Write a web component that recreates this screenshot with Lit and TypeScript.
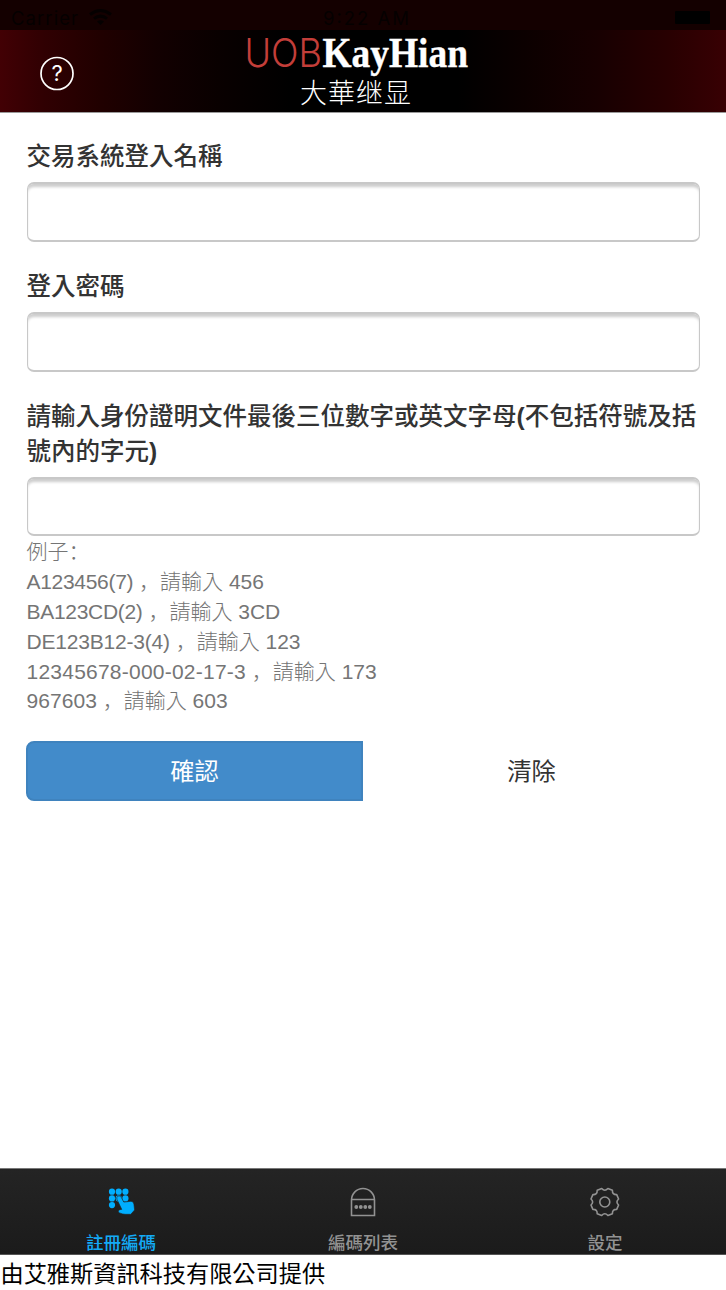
import { LitElement, html, css, svg } from "lit";
import { customElement } from "lit/decorators.js";

const EXAMPLES = [
  { id: "A123456(7)", tail: "456", cls: "e1" },
  { id: "BA123CD(2)", tail: "3CD", cls: "e2" },
  { id: "DE123B12-3(4)", tail: "123", cls: "e3" },
  { id: "12345678-000-02-17-3", tail: "173", cls: "e4" },
  { id: "967603", tail: "603", cls: "e5" },
];

@customElement("app-header")
class AppHeader extends LitElement {
  static styles = css`
    :host { display: block; height: 112px; border-bottom: 1px solid #999; }
    svg { display: block; }
    .status { font-family: Inter, sans-serif; font-size: 18.5px; fill: #050000; }
    .thin { font-family: Inter, sans-serif; font-weight: 300; font-size: 39px; fill: #c33e39; }
    .serif { font-family: "Liberation Serif", serif; font-weight: 700; font-size: 42px; fill: #fff; stroke: #fff; stroke-width: .4; }
    .cjk { font-family: "Noto Sans CJK SC", sans-serif; font-weight: 300; font-size: 27px; fill: #fff; }
    .q { font-family: Inter, sans-serif; font-size: 22px; font-weight: 400; fill: #fff; }
  `;
  render() {
    return html`<svg width="726" height="112" viewBox="0 0 726 112">
      <defs>
        <linearGradient id="bg">
          <stop offset="0" stop-color="#420004" />
          <stop offset=".06" stop-color="#300002" />
          <stop offset=".14" stop-color="#200000" />
          <stop offset=".22" stop-color="#120001" />
          <stop offset=".31" stop-color="#080000" />
          <stop offset=".4" stop-color="#000" />
          <stop offset=".63" stop-color="#000" />
          <stop offset=".72" stop-color="#0b0000" />
          <stop offset=".82" stop-color="#170001" />
          <stop offset=".92" stop-color="#280001" />
          <stop offset="1" stop-color="#380003" />
        </linearGradient>
      </defs>
      <rect width="726" height="112" fill="url(#bg)" />
      <rect width="726" height="30" fill="#140000" />
      <text class="status" x="11" y="25" textLength="67">Carrier</text>
      <g fill="none" stroke="#050000" stroke-width="3">
        <path d="M90 14.500Q100.500 6.500 111 14.500M94 18.700Q100.500 13.500 107 18.700" />
        <path d="M97 21.500Q100.500 19 104 21.500L100.500 25Z" fill="#050000" stroke="none" />
      </g>
      <text class="status" x="323" y="25" textLength="86">9:22 AM</text>
      <rect x="675" y="11" width="35" height="13" rx="1" fill="#000" />
      <circle cx="57" cy="73.500" r="16" fill="none" stroke="#fff" stroke-width="1.700" />
      <text class="q" x="57" y="81" text-anchor="middle">?</text>
      <text class="thin" x="244.500" y="67" textLength="77.500" lengthAdjust="spacingAndGlyphs">UOB</text>
      <text class="serif" x="322.500" y="67" textLength="145.500" lengthAdjust="spacingAndGlyphs">KayHian</text>
      <text class="cjk" x="300" y="103" textLength="111">大華继显</text>
    </svg>`;
  }
}

@customElement("app-tabs")
class AppTabs extends LitElement {
  static styles = css`
    :host {
      display: grid; grid-template-columns: repeat(3, 1fr); box-sizing: border-box; height: 87px;
      background: linear-gradient(#242424, #1b1b1b); border-top: 1px solid #777; border-bottom: 1px solid #555;
      font: 500 17.500px/26px "Noto Sans CJK TC", sans-serif; color: #929292;
    }
    .tab { display: flex; flex-direction: column; align-items: center; padding-top: 15px; }
    .active { color: #13aaf5; }
    svg { display: block; width: 34px; height: 34px; margin-bottom: 11px; flex: none; }
    .label { white-space: nowrap; }
  `;
  render() {
    return html`
      <div class="tab active">
        <svg viewBox="0 0 34 34" fill="#00aeff">
          ${[7.7, 14.4, 21.1].map((y) => [8, 14.7, 21.4].map((x) => (x > 14 && y > 20 ? null : svg`<circle cx=${x} cy=${y} r="3.100" />`)))}
          <path d="M13.500 12.500C15 11.500 16.400 12 17.200 13.300L19.800 18.100L27 17.300Q29.600 17.400 29.900 20L30.600 26L26.800 30.300H21.300Q18.800 30.300 15.500 28.900Q13.500 27.700 14.600 26.400Q15.600 25.300 17.800 25.400L13 15.500Q12.200 13.500 13.500 12.500Z" stroke="#202020" stroke-width=".6" />
        </svg>
        <span class="label">註冊編碼</span>
      </div>
      <div class="tab">
        <svg viewBox="0 0 34 34" fill="none" stroke="currentColor" stroke-width="1.600">
          <path d="M5.500 31.500V16A11.500 11.500 0 0 1 28.500 16V31.500ZM5.500 15.500H28.500" />
          <g fill="currentColor" stroke="none"><circle cx="10.300" cy="23" r="1.900" /><circle cx="14.800" cy="23" r="1.900" /><circle cx="19.300" cy="23" r="1.900" /><circle cx="23.800" cy="23" r="1.900" /></g>
        </svg>
        <span class="label">編碼列表</span>
      </div>
      <div class="tab">
        <svg viewBox="0 0 34 34" fill="none" stroke="currentColor" stroke-width="1.600" stroke-linejoin="round">
          <circle cx="16.800" cy="18" r="5" />
          <path d="M13.700 4.500Q16.800 8 19.900 4.500L24.400 6.300Q24.200 10.800 28.700 10.600L30.600 15Q27.300 18 30.600 21L28.700 25.400Q24.200 25.200 24.400 29.700L19.900 31.500Q16.800 28 13.700 31.500L9.200 29.700Q9.400 25.200 4.900 25.400L3 21Q6.300 18 3 15L4.900 10.600Q9.400 10.800 9.200 6.300Z" />
        </svg>
        <span class="label">設定</span>
      </div>`;
  }
}

@customElement("app-root")
class AppRoot extends LitElement {
  static styles = css`
    :host {
      display: flex; flex-direction: column; height: 1290px; background: #fff; color: #333;
      font-family: "Liberation Sans", "Noto Sans CJK TC", sans-serif;
    }
    .form { flex: 1; padding: 26px 26px 0; }
    .label { display: block; font: 500 24.500px/35px "Liberation Sans", "Noto Sans CJK TC", sans-serif; padding-left: .5px; margin-bottom: 8px; white-space: nowrap; }
    .p { font-weight: 700; }
    .input {
      display: block; box-sizing: border-box; width: 673px; height: 60px; margin: 0 0 27px .5px;
      border: 1.500px solid #c8c8c8; border-width: 2px 1.500px; border-radius: 7px; background: #fff;
      box-shadow: inset 0 4px 3px -1px rgba(0, 0, 0, .2); outline: none; padding: 0;
    }
    .last { height: 59px; margin-bottom: 0; }
    .help { color: #757575; font-size: 21px; line-height: 29.900px; padding-bottom: 25.600px; }
    .line { height: 29.900px; white-space: pre; font-weight: 300; padding-left: .5px; }
    .punct { font-family: "Noto Sans CJK SC", sans-serif; }
    .e1 { letter-spacing: -.3px; }
    .e2 { letter-spacing: -.3px; }
    .e3 { letter-spacing: -.2px; }
    .e4 { letter-spacing: .23px; }
    .e5 { letter-spacing: .05px; }
    .actions { display: flex; font-size: 24.200px; text-align: center; }
    .btn { width: 337px; height: 60px; box-sizing: border-box; line-height: 62px; }
    .primary { background: #428bca; border: 2px solid #3f83be; border-radius: 8px 0 0 8px; color: #fff; line-height: 58px; }
    .footer { height: 35px; color: #000; font: 23.200px/34px "Noto Sans CJK TC", sans-serif; text-indent: .5px; }
  `;
  render() {
    return html`
      <app-header></app-header>
      <div class="form">
        <label class="label">交易系統登入名稱</label>
        <input class="input" />
        <label class="label">登入密碼</label>
        <input class="input" type="password" />
        <label class="label">請輸入身份證明文件最後三位數字或英文字母<span class="p">(</span>不包括符號及括<br />號內的字元<span class="p">)</span></label>
        <input class="input last" />
        <div class="help">
          <div class="line">例子<span class="punct">：</span></div>
          ${EXAMPLES.map((e) => html`<div class="line"><span class=${e.cls}>${e.id}</span> <span class="punct">，</span>請輸入 ${e.tail}</div>`)}
        </div>
        <div class="actions">
          <div class="btn primary">確認</div>
          <div class="btn">清除</div>
        </div>
      </div>
      <app-tabs></app-tabs>
      <div class="footer">由艾雅斯資訊科技有限公司提供</div>`;
  }
}
